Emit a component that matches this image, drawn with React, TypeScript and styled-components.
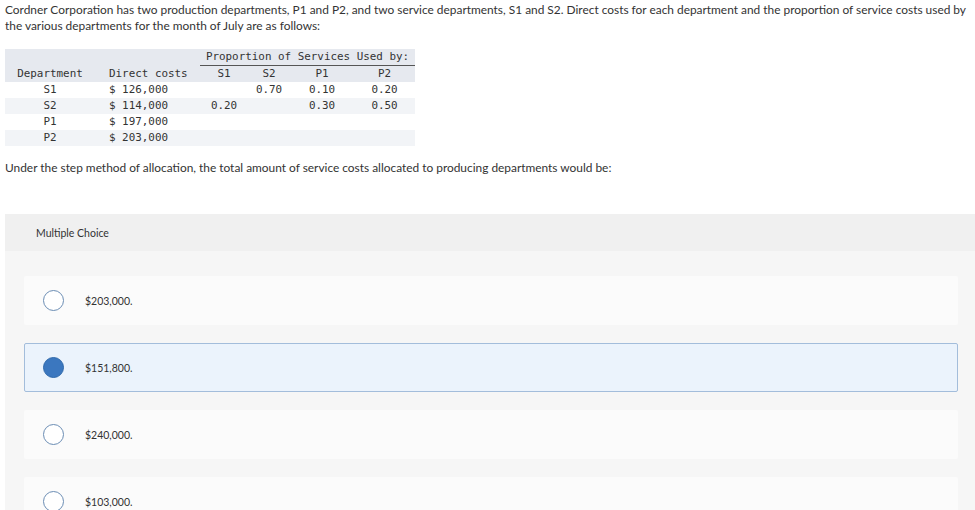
import React from "react";
import styled, { createGlobalStyle } from "styled-components";

const GlobalStyle = createGlobalStyle`
  html, body {
    margin: 0;
    padding: 0;
    background: #fff;
  }
  body {
    font-family: Lato, "Liberation Sans", sans-serif;
    color: #333;
    overflow: hidden;
  }
`;

const rows = [
	{ dept: "S1", cost: "$ 126,000", s1: "", s2: "0.70", p1: "0.10", p2: "0.20" },
	{ dept: "S2", cost: "$ 114,000", s1: "0.20", s2: "", p1: "0.30", p2: "0.50" },
	{ dept: "P1", cost: "$ 197,000", s1: "", s2: "", p1: "", p2: "" },
	{ dept: "P2", cost: "$ 203,000", s1: "", s2: "", p1: "", p2: "" },
];

const choices = ["$203,000.", "$151,800.", "$240,000.", "$103,000."];

const App: React.FC = () => {
	const selected = 1;
	return (
		<Page>
			<GlobalStyle />
			<Question>
				Cordner Corporation has two production departments, P1 and P2, and two
				service departments, S1 and S2. Direct costs for each department and the
				proportion of service costs used by the various departments for the month
				of July are as follows:
			</Question>
			<DataTable>
				<colgroup>
					<col style={{ width: 90 }} />
					<col style={{ width: 105 }} />
					<col style={{ width: 48 }} />
					<col style={{ width: 42 }} />
					<col style={{ width: 64 }} />
					<col style={{ width: 61 }} />
				</colgroup>
				<thead>
					<HeadRow>
						<th />
						<th />
						<SpanHead colSpan={4}>Proportion of Services Used by:</SpanHead>
					</HeadRow>
					<HeadRow>
						<Cell>Department</Cell>
						<CostCell>Direct costs</CostCell>
						<Cell>S1</Cell>
						<Cell>S2</Cell>
						<Cell>P1</Cell>
						<Cell>P2</Cell>
					</HeadRow>
				</thead>
				<tbody>
					{rows.map((r, i) => (
						<BodyRow key={r.dept} $shade={i % 2 === 1}>
							<Cell>{r.dept}</Cell>
							<CostCell>{r.cost}</CostCell>
							<Cell>{r.s1}</Cell>
							<Cell>{r.s2}</Cell>
							<Cell>{r.p1}</Cell>
							<Cell>{r.p2}</Cell>
						</BodyRow>
					))}
				</tbody>
			</DataTable>
			<Prompt>
				Under the step method of allocation, the total amount of service costs
				allocated to producing departments would be:
			</Prompt>
			<ChoicePanel>
				<ChoiceHeader>Multiple Choice</ChoiceHeader>
				<ChoiceList>
					{choices.map((c, i) => (
						<Choice key={c} $active={i === selected}>
							<Radio $active={i === selected} />
							<ChoiceText>{c}</ChoiceText>
						</Choice>
					))}
				</ChoiceList>
			</ChoicePanel>
		</Page>
	);
};

const Page = styled.div`
	width: 975px;
	height: 510px;
	overflow: hidden;
`;

const Question = styled.p`
	margin: 0;
	padding: 2px 8px 0 5px;
	font-size: 11.9px;
	line-height: 16px;
	color: #333;
`;

const DataTable = styled.table`
	margin: 15px 0 0 5px;
	border-collapse: collapse;
	table-layout: fixed;
	width: 410px;
	font-family: "DejaVu Sans Mono", "Liberation Mono", monospace;
	font-size: 10.9px;
	color: #333;
	th,
	td {
		padding: 0;
		height: 16px;
		line-height: 16px;
		font-weight: normal;
		white-space: nowrap;
	}
`;

const HeadRow = styled.tr`
	background: #e6e9ef;
`;

const BodyRow = styled.tr<{ $shade: boolean }>`
	background: ${({ $shade }) => ($shade ? "#f2f4f7" : "#ffffff")};
`;

const Cell = styled.td`
	text-align: center;
`;

const CostCell = styled.td`
	text-align: left;
	padding-left: 14px !important;
`;

const SpanHead = styled.th`
	text-align: center;
	border-bottom: 1px solid #555;
`;

const Prompt = styled.p`
	margin: 14px 0 0 5px;
	font-size: 11.9px;
	line-height: 16px;
	color: #333;
`;

const ChoicePanel = styled.section`
	margin: 38px 0 0 5px;
	background: #f6f6f6;
	height: 300px;
`;

const ChoiceHeader = styled.div`
	height: 37px;
	display: flex;
	align-items: center;
	padding-left: 31px;
	background: #f0f0f0;
	font-size: 10.5px;
	color: #333;
`;

const ChoiceList = styled.div`
	display: flex;
	flex-direction: column;
	gap: 18px;
	padding: 25px 17px 0 19px;
`;

const Choice = styled.div<{ $active: boolean }>`
	height: 49px;
	box-sizing: border-box;
	display: flex;
	align-items: center;
	padding-left: 18px;
	background: ${({ $active }) => ($active ? "#ebf3fc" : "#fbfbfb")};
	border: 1px solid ${({ $active }) => ($active ? "#a3bddb" : "transparent")};
	border-radius: 2px;
`;

const Radio = styled.span<{ $active: boolean }>`
	width: 21px;
	height: 21px;
	box-sizing: border-box;
	border-radius: 50%;
	border: 1.5px solid ${({ $active }) => ($active ? "#2f69ab" : "#6b8db4")};
	background: ${({ $active }) => ($active ? "#3b77bf" : "#ffffff")};
	flex-shrink: 0;
`;

const ChoiceText = styled.span`
	margin-left: 21px;
	font-size: 10.5px;
	color: #333;
`;

export default App;
